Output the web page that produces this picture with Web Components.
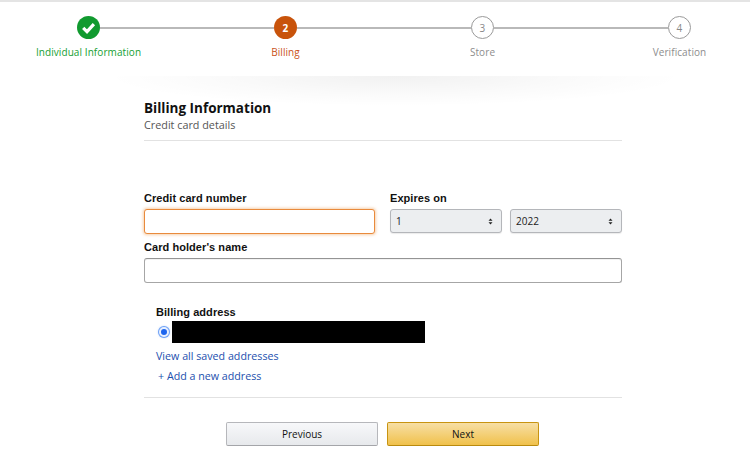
<!DOCTYPE html>
<html>
<head>
<meta charset="utf-8">
<title>Billing</title>
<style>
  html, body { margin: 0; background: #fff; }
  body { font-family: "Open Sans", "Liberation Sans", sans-serif; color: #111; overflow: hidden; height: 473px; }
  .line { display: flex; align-items: flex-start; }
</style>
</head>
<body>
<wizard-steps>
  <wizard-step state="done" num="1">Individual Information</wizard-step>
  <wizard-step state="current" num="2">Billing</wizard-step>
  <wizard-step num="3">Store</wizard-step>
  <wizard-step num="4">Verification</wizard-step>
</wizard-steps>

<billing-panel>
  <form-row slot="row1">
    <form-field label="Credit card number" style="flex:0 0 231px"><text-box focused></text-box></form-field>
    <form-field label="Expires on" style="flex:1">
      <div class="line" style="gap:8px">
        <select-box value="1"></select-box>
        <select-box value="2022"></select-box>
      </div>
    </form-field>
  </form-row>
  <form-field slot="row2" label="Card holder's name"><text-box></text-box></form-field>
  <address-picker slot="address"></address-picker>
  <action-button slot="actions">Previous</action-button>
  <action-button slot="actions" primary>Next</action-button>
</billing-panel>

<script>
class WizardSteps extends HTMLElement {
  connectedCallback() {
    this.attachShadow({ mode: 'open' }).innerHTML = `
      <style>
        :host { display: block; border-top: 2px solid #e4e4e4; height: 76px; overflow: hidden; box-sizing: border-box; }
        .track { display: flex; width: 788px; margin-left: -10px; padding-top: 14px; }
      </style>
      <div class="track"><slot></slot></div>`;
  }
}
class WizardStep extends HTMLElement {
  connectedCallback() {
    const state = this.getAttribute('state') || 'todo';
    const num = this.getAttribute('num');
    const mark = state === 'done'
      ? `<svg width="23" height="23" viewBox="0 0 23 23"><circle cx="11.5" cy="11.5" r="11.5" fill="#119a2f"/><path d="M6.2 11.9l3.8 3.8 6.9-7.6" fill="none" stroke="#fff" stroke-width="3.2"/></svg>`
      : num;
    this.attachShadow({ mode: 'open' }).innerHTML = `
      <style>
        :host { display: block; flex: 0 0 197px; text-align: center; font-size: 10px; line-height: 14px; letter-spacing: .08px; }
        .head { display: flex; align-items: center; height: 23px; }
        .bar { flex: 1; height: 2px; background: #b9b9b9; }
        :host([num="1"]) .bar:first-child, :host([num="4"]) .bar:last-child { visibility: hidden; }
        .dot { flex: 0 0 23px; height: 23px; box-sizing: border-box; border-radius: 50%; display: flex; align-items: center; justify-content: center;
               font-size: 10px; border: 1px solid #9a9a9a; color: #888; }
        .done { border: 0; }
        .current { border: 0; background: #c8530b; color: #fff; font-weight: 700; }
        .label { margin-top: 6px; color: #8d8d8d; white-space: nowrap; }
        :host([state="done"]) .label { color: #15a032; }
        :host([state="current"]) .label { color: #c9531a; }
      </style>
      <div class="head"><span class="bar"></span><span class="dot ${state}">${mark}</span><span class="bar"></span></div>
      <div class="label"><slot></slot></div>`;
  }
}
class BillingPanel extends HTMLElement {
  connectedCallback() {
    this.attachShadow({ mode: 'open' }).innerHTML = `
      <style>
        :host { display: block; padding: 0 128px 0 144px; height: 397px; box-sizing: border-box;
                background: radial-gradient(ellipse 290px 30px at 395px 0, rgba(0,0,0,.055), rgba(0,0,0,.02) 60%, transparent) no-repeat; }
        header { padding-top: 23px; height: 41px; border-bottom: 1px solid #e2e2e2; }
        h1 { margin: 0; font-size: 13.5px; line-height: 18px; font-weight: 700; color: #111; }
        p { margin: 0; font-size: 10.8px; line-height: 16px; color: #555; }
        .r1 { margin-top: 50px; }
        .r2 { margin-top: 6px; }
        .addr { margin-top: 22px; height: 92px; border-bottom: 1px solid #e2e2e2; }
        .actions { display: flex; justify-content: center; gap: 9px; margin-top: 24px; padding-right: 1px; }
      </style>
      <header><h1>Billing Information</h1><p>Credit card details</p></header>
      <div class="r1"><slot name="row1"></slot></div>
      <div class="r2"><slot name="row2"></slot></div>
      <div class="addr"><slot name="address"></slot></div>
      <div class="actions"><slot name="actions"></slot></div>`;
  }
}
class FormRow extends HTMLElement {
  connectedCallback() {
    this.attachShadow({ mode: 'open' }).innerHTML = `
      <style>:host { display: flex; gap: 15px; }</style><slot></slot>`;
  }
}
class FormField extends HTMLElement {
  connectedCallback() {
    this.attachShadow({ mode: 'open' }).innerHTML = `
      <style>
        :host { display: block; min-width: 0; }
        label { display: block; font: 700 11px/14px "Liberation Sans", Arial, sans-serif; letter-spacing: .06px; color: #111; margin-bottom: 4px; }
      </style>
      <label>${this.getAttribute('label')}</label><slot></slot>`;
  }
}
class TextBox extends HTMLElement {
  connectedCallback() {
    this.attachShadow({ mode: 'open' }).innerHTML = `
      <style>
        :host { display: block; }
        input { display: block; width: 100%; height: 25px; box-sizing: border-box; background: #fff; border: 1px solid #a6a6a6; border-top-color: #949494;
                border-radius: 3px; outline: 0; box-shadow: 0 1px 0 rgba(0,0,0,.05) inset; padding: 0 6px; }
        :host([focused]) input { border-color: #e98a3c; box-shadow: 0 0 3px 1px rgba(228,121,17,.35); }
      </style>
      <input type="text">`;
  }
}
class SelectBox extends HTMLElement {
  connectedCallback() {
    this.attachShadow({ mode: 'open' }).innerHTML = `
      <style>
        :host { display: flex; flex: 1; align-items: center; justify-content: space-between; height: 24px; box-sizing: border-box;
                padding: 0 8px 0 5px; background: #eceef0; border: 1px solid #b4b6ba; border-radius: 3px; box-shadow: 0 1px 1px rgba(0,0,0,.08);
                font-size: 10px; color: #222; }
      </style>
      <span>${this.getAttribute('value')}</span>
      <svg width="5" height="7" viewBox="0 0 5 7"><path d="M2.5 .5L4.5 2.8H.5zM2.5 6.5L.5 4.2h4z" fill="#222"/></svg>`;
  }
}
class AddressPicker extends HTMLElement {
  connectedCallback() {
    this.attachShadow({ mode: 'open' }).innerHTML = `
      <style>
        :host { display: block; padding-left: 12px; }
        h2 { margin: 0; font: 700 11px/14px "Liberation Sans", Arial, sans-serif; letter-spacing: .06px; color: #111; }
        .opt { display: flex; align-items: center; height: 22px; margin-top: 2px; }
        .radio { width: 10px; height: 10px; box-sizing: border-box; margin: 0 3px 0 3px; border-radius: 50%; background: #1b64ee; border: 2px solid #e8f0ff;
                 box-shadow: 0 0 0 1px #6ea1f5, 0 0 2px 1px rgba(60,130,245,.3); }
        .hidden { width: 253px; height: 22px; background: #000; }
        a { display: block; color: #1c4fae; font-size: 10.7px; line-height: 14px; text-decoration: none; }
        .view { margin-top: 6px; }
        .add { margin: 6px 0 0 2px; }
      </style>
      <h2>Billing address</h2>
      <div class="opt"><span class="radio"></span><span class="hidden"></span></div>
      <a class="view" href="#">View all saved addresses</a>
      <a class="add" href="#">+ Add a new address</a>`;
  }
}
class ActionButton extends HTMLElement {
  connectedCallback() {
    this.attachShadow({ mode: 'open' }).innerHTML = `
      <style>
        :host { display: block; }
        button { display: block; width: 152px; height: 24px; box-sizing: border-box; padding: 0; border-radius: 2px; font: 10px "Open Sans", sans-serif; color: #111;
                 border: 1px solid #b6b7bb; border-bottom-color: #a4a5a9; background: linear-gradient(#f7f8fa, #e7e9ec); }
        :host([primary]) button { border-color: #c89411 #c89411 #b98a0e; background: linear-gradient(#f7dfa5, #f0c14b); }
      </style>
      <button type="button"><slot></slot></button>`;
  }
}
customElements.define('wizard-steps', WizardSteps);
customElements.define('wizard-step', WizardStep);
customElements.define('billing-panel', BillingPanel);
customElements.define('form-row', FormRow);
customElements.define('form-field', FormField);
customElements.define('text-box', TextBox);
customElements.define('select-box', SelectBox);
customElements.define('address-picker', AddressPicker);
customElements.define('action-button', ActionButton);
</script>
</body>
</html>
